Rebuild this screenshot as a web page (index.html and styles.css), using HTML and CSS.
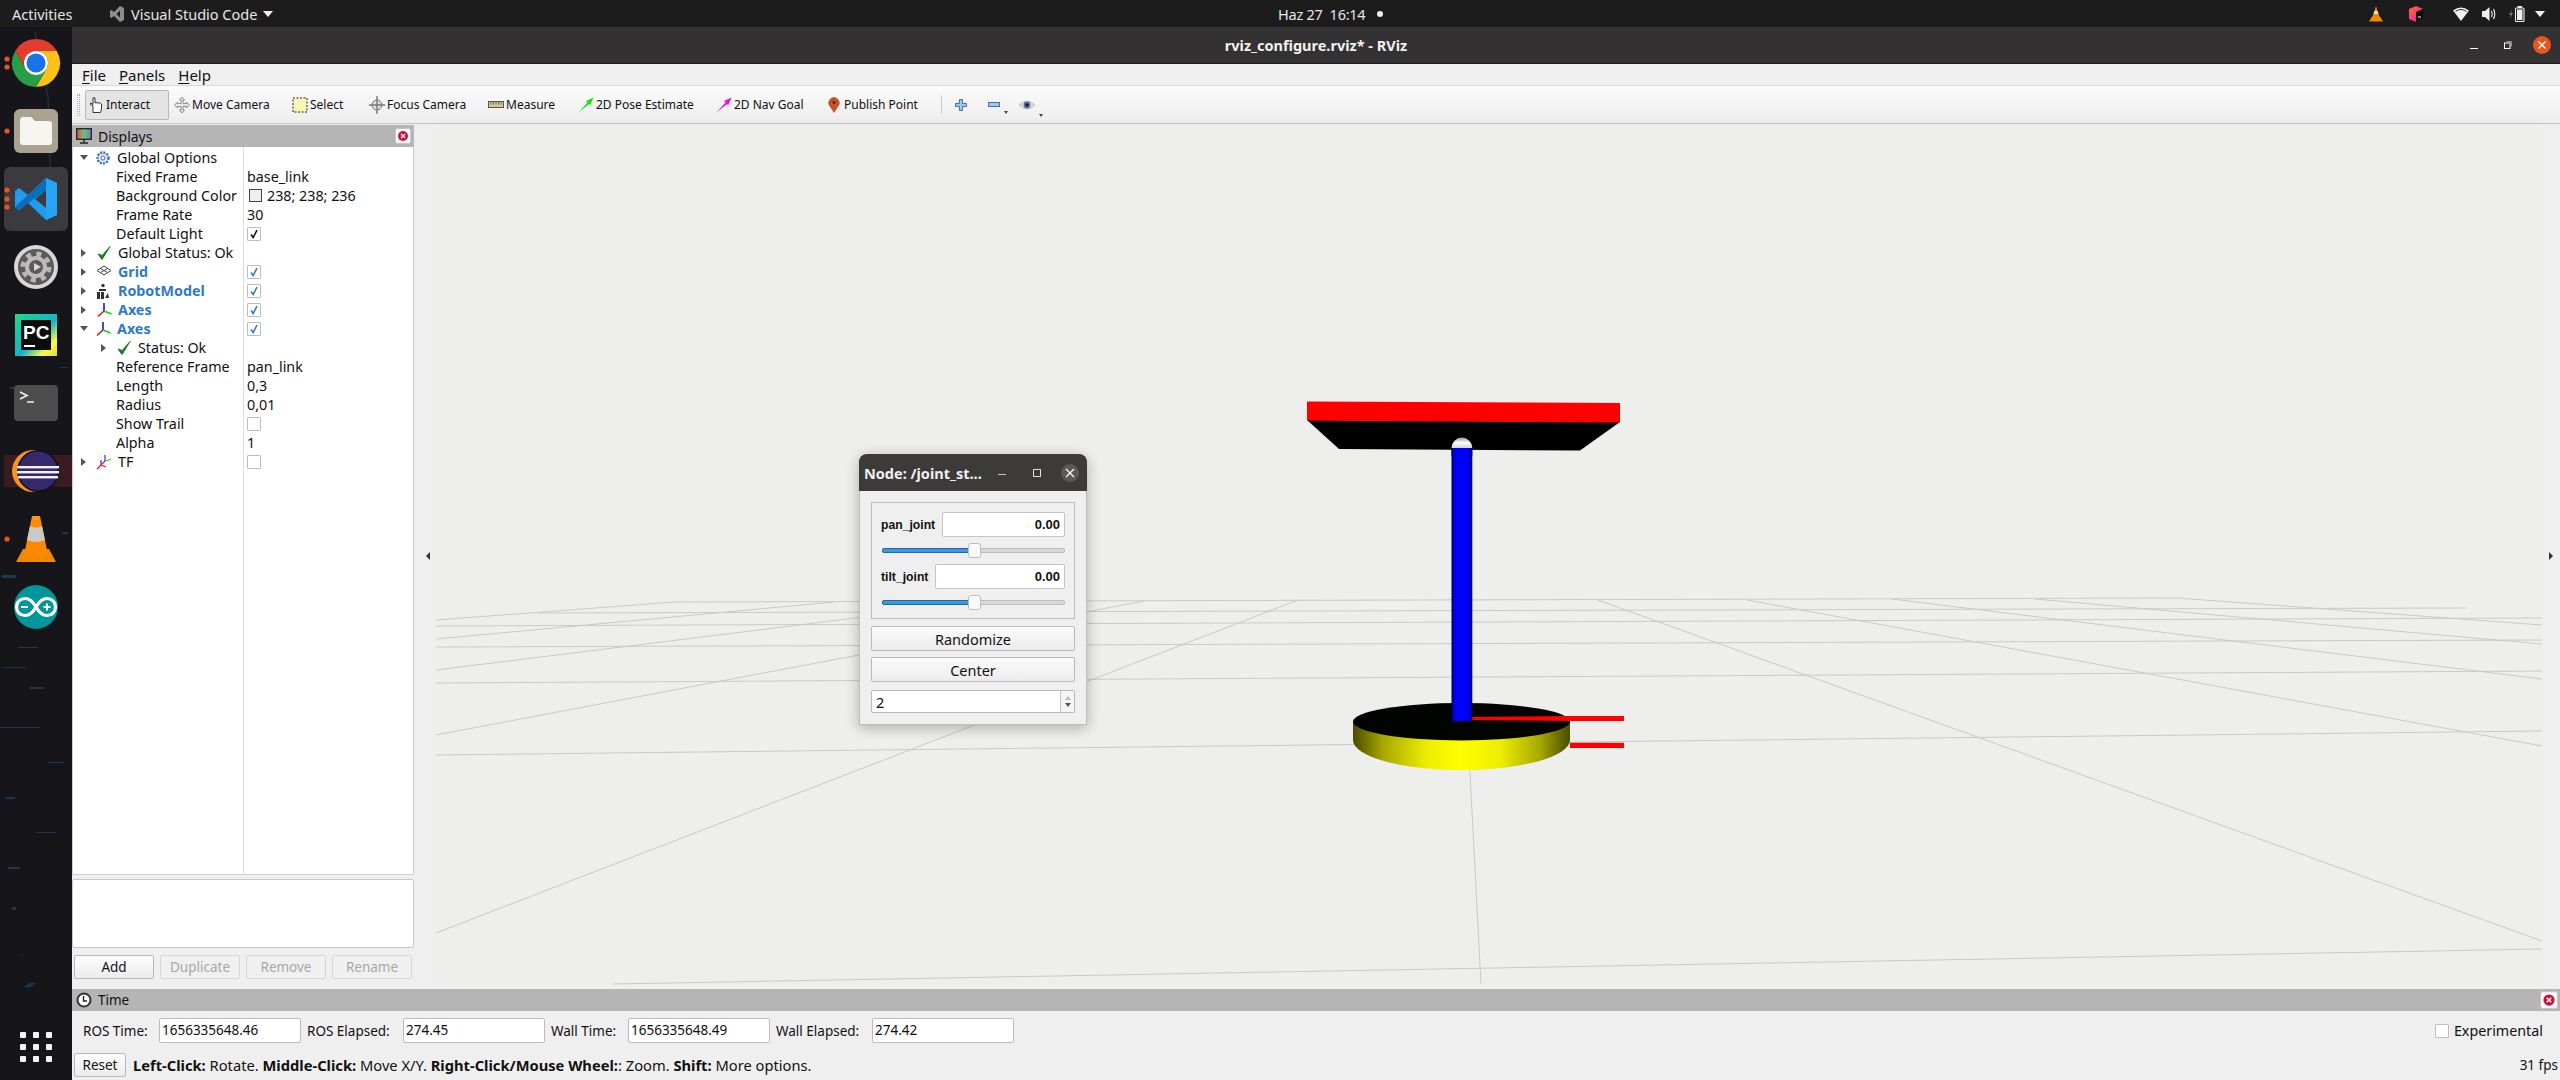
FILE: index.html
```html
<!DOCTYPE html>
<html lang="en">
<head>
<meta charset="utf-8">
<title>rviz_configure.rviz* - RViz</title>
<link rel="stylesheet" href="styles.css">
</head>
<body>
<svg class="sprite" aria-hidden="true">
  <defs>
    <linearGradient id="gBlue" x1="0" x2="1" y1="0" y2="0"><stop offset="0" stop-color="#000050"/><stop offset=".12" stop-color="#0000d8"/><stop offset=".3" stop-color="#0000ff"/><stop offset=".7" stop-color="#0000ff"/><stop offset=".88" stop-color="#0000d8"/><stop offset="1" stop-color="#000050"/></linearGradient>
    <linearGradient id="gYellow" x1="0" x2="1" y1="0" y2="0"><stop offset="0" stop-color="#4a4a00"/><stop offset=".14" stop-color="#a8a800"/><stop offset=".34" stop-color="#eded00"/><stop offset=".5" stop-color="#ffff00"/><stop offset=".68" stop-color="#eded00"/><stop offset=".86" stop-color="#a8a800"/><stop offset="1" stop-color="#4a4a00"/></linearGradient>
    <linearGradient id="gSphere" x1="0" x2="0" y1="0" y2="1"><stop offset="0" stop-color="#9c9c9c"/><stop offset=".5" stop-color="#ffffff"/><stop offset="1" stop-color="#d5d5d5"/></linearGradient>
    <linearGradient id="gPC" x1="0" x2="1" y1="0" y2="1"><stop offset="0" stop-color="#21d789"/><stop offset=".55" stop-color="#12b5c9"/><stop offset=".8" stop-color="#fcf84a"/><stop offset="1" stop-color="#d8e23e"/></linearGradient>
    <linearGradient id="gScreen" x1="0" x2="1" y1="0" y2="0"><stop offset="0" stop-color="#d9534f"/><stop offset=".5" stop-color="#6fbf73"/><stop offset="1" stop-color="#6f7fd0"/></linearGradient>
    <linearGradient id="gCube" x1="0" x2="1" y1="0" y2="1"><stop offset="0" stop-color="#f97a12"/><stop offset=".6" stop-color="#f72d8f"/><stop offset="1" stop-color="#a020f0"/></linearGradient>
    <symbol id="i-check" viewBox="0 0 14 14"><path d="M3.5 7.5 L6 11 L10.5 2.5" fill="none" stroke="currentColor" stroke-width="1.8"/></symbol>
    <symbol id="i-ok" viewBox="0 0 16 16"><path d="M2 9 L6 14.5 L14 1.5 L6.2 10.5 Z" fill="#1e7a25" stroke="#1e7a25" stroke-width="1"/></symbol>
    <symbol id="i-axes" viewBox="0 0 16 16"><path d="M8 9 V1" stroke="#1414e0" stroke-width="1.6"/><path d="M8 9 L2 14.5" stroke="#e01414" stroke-width="1.6"/><path d="M8 9 L15.5 12" stroke="#14d014" stroke-width="1.6"/></symbol>
    <symbol id="i-close" viewBox="0 0 16 16"><rect x=".5" y=".5" width="15" height="15" rx="2" fill="#fafafa" stroke="#c4c4c4"/><circle cx="8" cy="8" r="5" fill="#d0103a"/><path d="M6 6 L10 10 M10 6 L6 10" stroke="#fff" stroke-width="1.3"/></symbol>
  </defs>
</svg>

<header class="topbar">
  <span class="activities">Activities</span>
  <div class="appmenu">
    <svg class="ic14" viewBox="0 0 14 16"><path d="M10 0 L14 2 V14 L10 16 L4 10 L1.5 12 L0 11 V5 L1.5 4 L4 6 Z M10 4.5 L6.5 8 L10 11.5 Z" fill="#8d8d8d" fill-rule="evenodd"/></svg>
    <span>Visual Studio Code</span>
    <span class="caret"></span>
  </div>
  <div class="clock"><span>Haz 27&nbsp;&nbsp;16:14</span><span class="clockdot"></span></div>
  <div class="tray">
    <svg class="tray-vlc" viewBox="0 0 14 16"><path d="M7 0 L10.5 11 H3.5 Z" fill="#f08a00"/><path d="M5.4 5 H8.6 L9.4 8 H4.6 Z" fill="#ddd"/><path d="M3 10.5 H11 L14 15.5 H0 Z" fill="#f08a00"/></svg>
    <svg class="tray-pc" viewBox="0 0 14 16"><path d="M7 0 L14 3 V12 L7 16 L0 13 V3 Z" fill="url(#gCube)"/><path d="M7 6 L14 3 V12 L7 16 Z" fill="#0c0c0c"/><path d="M9 11 H12" stroke="#fff"/></svg>
    <svg class="tray-wifi" viewBox="0 0 16 14"><path d="M0 3.5 Q8 -2.5 16 3.5 L8 14 Z" fill="#f2f2f2"/><path d="M2.5 4.4 Q8 .6 13.5 4.4" fill="none" stroke="#1c1c1c" stroke-width=".9"/></svg>
    <svg class="tray-vol" viewBox="0 0 15 14"><path d="M0 4 H3 L7.5 0 V14 L3 10 H0 Z" fill="#eee"/><path d="M9.5 4 Q11 7 9.5 10 M11.5 2 Q14 7 11.5 12" stroke="#eee" stroke-width="1.2" fill="none"/></svg>
    <svg class="tray-bat" viewBox="0 0 16 16"><path d="M3 3 L0 9 H2 L1 13 L4 7 H2 Z" fill="#777"/><rect x="6.5" y="2" width="8.5" height="13.5" rx="1" fill="none" stroke="#eee" stroke-width="1.1"/><rect x="8.5" y="0" width="4.5" height="2" fill="#eee"/><rect x="8" y="3.5" width="5.5" height="10.5" fill="#eee"/></svg>
    <span class="caret tray-caret"></span>
  </div>
</header>

<div class="desktop">
  <nav class="dock">
    <svg class="wallpaper" viewBox="0 0 72 1053" preserveAspectRatio="none" aria-hidden="true">
      <path d="M35 5 L48 70 L52 200" stroke="#1c2f44" stroke-width="1.5" fill="none"/>
      <path d="M4 428 L72 428 L72 460 L4 460 Z" fill="#3a1b22"/>
      <path d="M0 700 h40 v1 h-40 Z M8 840 h12 v2 h-12 Z M18 620 h20 v1 h-20 Z M2 548 h14 v3 h-14 Z M10 360 h6 v2 h-6 Z M24 960 l6 -4 h6 l-6 4 Z M20 928 l2 -1 h2 l-2 1 Z M60 340 h8 v1 h-8 Z M4 640 h22 v1 h-22 Z M30 660 h14 v2 h-14 Z M48 735 h16 v1 h-16 Z M6 770 h9 v2 h-9 Z M36 805 h20 v1 h-20 Z M12 880 h4 v3 h-4 Z M62 505 h6 v2 h-6 Z" fill="#1a3954"/>
    </svg>
    <div class="dock-item"><svg viewBox="0 0 72 68">
      <circle cx="7" cy="30" r="2.6" fill="#e95420"/><circle cx="7" cy="38" r="2.6" fill="#e95420"/>
      <path d="M15.2 22 A24 24 0 0 1 56.8 22 H36 A12 12 0 0 0 25.6 40 Z" fill="#e33b2e"/>
      <path d="M56.8 22 A24 24 0 0 1 36 58 L46.4 40 A12 12 0 0 0 36 22 Z" fill="#fbc116"/>
      <path d="M36 58 A24 24 0 0 1 15.2 22 L25.6 40 A12 12 0 0 0 46.4 40 Z" fill="#2a9d47"/>
      <circle cx="36" cy="34" r="12" fill="#fff"/><circle cx="36" cy="34" r="9.5" fill="#1a73e8"/>
    </svg></div>
    <div class="dock-item"><svg viewBox="0 0 72 68">
      <circle cx="7" cy="34" r="2.6" fill="#e95420"/>
      <rect x="14" y="12" width="44" height="44" rx="6" fill="#aaa391"/>
      <path d="M20 24 Q20 20 23 20 H31 L35 24 H49 Q52 24 52 27 V45 Q52 48 49 48 H23 Q20 48 20 45 Z" fill="#f7f5ef"/>
    </svg></div>
    <div class="dock-item"><svg viewBox="0 0 72 68">
      <rect x="4" y="2" width="64" height="64" rx="6" fill="#3b3b3f"/>
      <circle cx="7" cy="25" r="2.6" fill="#e95420"/><circle cx="7" cy="34" r="2.6" fill="#e95420"/><circle cx="7" cy="42" r="2.6" fill="#e95420"/>
      <path d="M46 13 L57 18 V50 L46 55 L28 38 L19 45 L15 42 V26 L19 23 L28 30 Z M46 25 L35 34 L46 43 Z" fill="#1f9cf0" fill-rule="evenodd"/>
      <path d="M15 42 L46 13 V25 L19 45 Z" fill="#0a6fb8"/>
      <path d="M46 13 L57 18 V50 L46 55 Z" fill="#27a4f5"/>
    </svg></div>
    <div class="dock-item"><svg viewBox="0 0 72 68">
      <circle cx="36" cy="34" r="22" fill="#d9d8d5"/><circle cx="36" cy="34" r="18" fill="#5a595d"/>
      <circle cx="36" cy="34" r="13" fill="none" stroke="#b9b8b5" stroke-width="5" stroke-dasharray="5 5.2"/>
      <circle cx="36" cy="34" r="9" fill="none" stroke="#bdbcb9" stroke-width="4"/>
      <path d="M34 30 L41 34 L34 38 Z" fill="#d9d8d5"/>
    </svg></div>
    <div class="dock-item"><svg viewBox="0 0 72 68">
      <rect x="15" y="13" width="42" height="42" fill="url(#gPC)"/>
      <rect x="21" y="19" width="30" height="30" fill="#0d0d0d"/>
      <text x="23" y="38" class="pc-text">PC</text>
      <rect x="24" y="44" width="11" height="2" fill="#fff"/>
    </svg></div>
    <div class="dock-item"><svg viewBox="0 0 72 68">
      <rect x="14" y="16" width="44" height="36" rx="4" fill="#4d4d4d"/>
      <path d="M20 23 L27 26.5 L20 30 M27 33 H34" stroke="#f2f2f2" stroke-width="1.6" fill="none"/>
    </svg></div>
    <div class="dock-item"><svg viewBox="0 0 72 68">
      <circle cx="33" cy="34" r="21" fill="#f7941e"/>
      <circle cx="38" cy="34" r="21" fill="#0f0c1c"/><circle cx="38" cy="34" r="19.5" fill="#35296b"/>
      <rect x="17" y="29" width="42" height="2.4" fill="#f4f2fa"/><rect x="17" y="34" width="42" height="2.4" fill="#f4f2fa"/><rect x="18" y="39" width="40" height="2.4" fill="#f4f2fa"/>
    </svg></div>
    <div class="dock-item"><svg viewBox="0 0 72 68">
      <circle cx="7" cy="34" r="2.6" fill="#e95420"/>
      <path d="M23 44 H49 L56 57 H16 Z" fill="#f08a00"/>
      <path d="M32 11 H40 L48 50 Q36 56 24 50 Z" fill="#ff8800"/>
      <path d="M30 21 Q36 24 42 21 L45 35 Q36 39 27 35 Z" fill="#c9c9c9"/>
      <path d="M33 11 H39 L40 15 H32 Z" fill="#f39a20"/>
    </svg></div>
    <div class="dock-item"><svg viewBox="0 0 72 68">
      <circle cx="36" cy="34" r="22" fill="#00979c"/>
      <path d="M36 34 C32 27 28 25.5 25 25.5 A8.5 8.5 0 0 0 25 42.5 C28 42.5 32 41 36 34 C40 27 44 25.5 47 25.5 A8.5 8.5 0 0 1 47 42.5 C44 42.5 40 41 36 34 Z" fill="none" stroke="#fff" stroke-width="3.2"/>
      <path d="M21 34 H28 M43.5 34 H50.5 M47 30.5 V37.5" stroke="#fff" stroke-width="2"/>
    </svg></div>
    <div class="dock-grid" aria-label="Show Applications"><i></i><i></i><i></i><i></i><i></i><i></i><i></i><i></i><i></i></div>
  </nav>

  <main class="app">
    <div class="titlebar">
      <span class="title">rviz_configure.rviz* - RViz</span>
      <div class="winctl">
        <span class="win-min"></span>
        <svg class="win-max" viewBox="0 0 8 8"><rect x=".5" y="2" width="5.5" height="5.5" fill="none" stroke="#fff" stroke-width="1"/><path d="M2.5 .5 H7.5 V5.5" fill="none" stroke="#aaa" stroke-width=".8"/></svg>
        <svg class="win-close" viewBox="0 0 18 18"><circle cx="9" cy="9" r="9" fill="#e95420"/><path d="M5.5 5.5 L12.5 12.5 M12.5 5.5 L5.5 12.5" stroke="#fff" stroke-width="1.4"/></svg>
      </div>
    </div>

    <div class="menubar">
      <span><u>F</u>ile</span><span><u>P</u>anels</span><span><u>H</u>elp</span>
    </div>

    <div class="toolbar">
      <span class="grip"></span>
      <div class="tool active t1">
        <svg viewBox="0 0 16 18"><path d="M5 16.5 V10 L2.5 8.5 V7 L5 8.5 V2 Q6 1 7 2 V7 Q8 6 9 7 Q10 6 11 7.3 Q12.5 6.5 13.5 8 V13 L12.5 16.5 Z" fill="#fff" stroke="#222" stroke-width=".9"/></svg>
        <span>Interact</span>
      </div>
      <div class="tool t2">
        <svg viewBox="0 0 16 18"><path d="M8 1 L10.5 4 H9 V7.5 H12.5 V6 L15.5 9 L12.5 12 V10.5 H9 V14 H10.5 L8 17 L5.5 14 H7 V10.5 H3.5 V12 L.5 9 L3.5 6 V7.5 H7 V4 H5.5 Z" fill="#e8e8e8" stroke="#777" stroke-width=".8"/></svg>
        <span>Move Camera</span>
      </div>
      <div class="tool t3">
        <svg viewBox="0 0 16 16"><rect x="1" y="1" width="14" height="14" fill="#fbf5b5" stroke="#222" stroke-dasharray="2 1.5"/></svg>
        <span>Select</span>
      </div>
      <div class="tool t4">
        <svg viewBox="0 0 16 18"><circle cx="8" cy="9" r="5" fill="#ddd" stroke="#777"/><path d="M8 0 V18 M0 9 H16" stroke="#777" stroke-width="1.4"/></svg>
        <span>Focus Camera</span>
      </div>
      <div class="tool t5">
        <svg viewBox="0 0 16 8"><rect x=".5" y=".5" width="15" height="6" fill="#d6c78f" stroke="#555"/><path d="M3 1 V3.5 M5.5 1 V3.5 M8 1 V3.5 M10.5 1 V3.5 M13 1 V3.5" stroke="#555" stroke-width=".8"/></svg>
        <span>Measure</span>
      </div>
      <div class="tool t6">
        <svg viewBox="0 0 16 16"><path d="M15.5 .5 L8 4 L9.5 5.5 L.5 15.5 L11 7 L12 8.5 Z" fill="#16e016"/></svg>
        <span>2D Pose Estimate</span>
      </div>
      <div class="tool t7">
        <svg viewBox="0 0 16 16"><path d="M15.5 .5 L8 4 L9.5 5.5 L.5 15.5 L11 7 L12 8.5 Z" fill="#f010d8"/></svg>
        <span>2D Nav Goal</span>
      </div>
      <div class="tool t8">
        <svg class="pin" viewBox="0 0 12 16"><path d="M6 16 L1.5 9 A5.5 5.5 0 1 1 10.5 9 Z" fill="#c4552b"/><circle cx="6" cy="5.5" r="1.8" fill="#6f2f14"/></svg>
        <span>Publish Point</span>
      </div>
      <span class="tool-sep"></span>
      <svg class="tool-plus" viewBox="0 0 12 12"><path d="M4.5 .5 H7.5 V4.5 H11.5 V7.5 H7.5 V11.5 H4.5 V7.5 H.5 V4.5 H4.5 Z" fill="#a7c4e8" stroke="#3e6fb3"/></svg>
      <div class="tool-more">
        <svg class="tool-minus" viewBox="0 0 12 5"><rect x=".5" y=".5" width="11" height="4" fill="#a7c4e8" stroke="#3e6fb3"/></svg>
        <span class="tiny-caret"></span>
      </div>
      <div class="tool-more eye-wrap">
        <svg class="tool-eye" viewBox="0 0 16 10"><path d="M0 5 Q8 -3 16 5 Q8 13 0 5 Z" fill="#dcdce2" stroke="#aaa" stroke-width=".6"/><circle cx="8" cy="5" r="3.4" fill="#5a68a8"/><circle cx="8" cy="5" r="1.4" fill="#111"/></svg>
        <span class="tiny-caret"></span>
      </div>
    </div>

    <div class="workspace">
      <aside class="displays">
        <div class="dockhead">
          <svg class="monitor" viewBox="0 0 16 16"><rect x=".7" y=".7" width="14.6" height="10.6" fill="url(#gScreen)" stroke="#222" stroke-width="1.3"/><path d="M8 11 V14 M4 15 H12" stroke="#222" stroke-width="1.5"/></svg>
          <span class="dockhead-title">Displays</span>
          <svg class="closebtn" viewBox="0 0 16 16"><use href="#i-close"/></svg>
        </div>
        <div class="tree">
          <div class="row"><div class="name"><i class="arrow down"></i><svg class="ticon" viewBox="0 0 16 16"><circle cx="8" cy="8" r="5.5" fill="#dfe7f7" stroke="#3f6fc4" stroke-width="2.4" stroke-dasharray="2 1.2"/><circle cx="8" cy="8" r="2" fill="#fff" stroke="#3f6fc4"/></svg><span>Global Options</span></div></div>
          <div class="row"><div class="name prop">Fixed Frame</div><div class="val">base_link</div></div>
          <div class="row"><div class="name prop">Background Color</div><div class="val"><i class="swatch"></i>238; 238; 236</div></div>
          <div class="row"><div class="name prop">Frame Rate</div><div class="val">30</div></div>
          <div class="row"><div class="name prop">Default Light</div><div class="val"><span class="cb"><svg viewBox="0 0 14 14"><use href="#i-check"/></svg></span></div></div>
          <div class="row"><div class="name"><i class="arrow"></i><svg class="ticon" viewBox="0 0 16 16"><use href="#i-ok"/></svg><span>Global Status: Ok</span></div></div>
          <div class="row"><div class="name"><i class="arrow"></i><svg class="ticon" viewBox="0 0 16 16"><path d="M8 2 L15 6.5 L8 11 L1 6.5 Z M4.5 4.5 L11.5 8.5 M11.5 4.5 L4.5 8.5" fill="none" stroke="#444" stroke-width="1"/></svg><span class="blue">Grid</span></div><div class="val"><span class="cb on"><svg viewBox="0 0 14 14"><use href="#i-check"/></svg></span></div></div>
          <div class="row"><div class="name"><i class="arrow"></i><svg class="ticon" viewBox="0 0 16 16"><circle cx="7" cy="2.5" r="1.7" fill="#333"/><path d="M3 6 H10 V8 H3 Z M1 16 V9 H4 V16 Z M5 16 V9 H8 V16 Z M9 15 L12 10 L13 15 H15.5" fill="#333"/></svg><span class="blue">RobotModel</span></div><div class="val"><span class="cb on"><svg viewBox="0 0 14 14"><use href="#i-check"/></svg></span></div></div>
          <div class="row"><div class="name"><i class="arrow"></i><svg class="ticon" viewBox="0 0 16 16"><use href="#i-axes"/></svg><span class="blue">Axes</span></div><div class="val"><span class="cb on"><svg viewBox="0 0 14 14"><use href="#i-check"/></svg></span></div></div>
          <div class="row"><div class="name"><i class="arrow down"></i><svg class="ticon" viewBox="0 0 16 16"><use href="#i-axes"/></svg><span class="blue">Axes</span></div><div class="val"><span class="cb on"><svg viewBox="0 0 14 14"><use href="#i-check"/></svg></span></div></div>
          <div class="row"><div class="name sub"><i class="arrow"></i><svg class="ticon" viewBox="0 0 16 16"><use href="#i-ok"/></svg><span>Status: Ok</span></div></div>
          <div class="row"><div class="name prop">Reference Frame</div><div class="val">pan_link</div></div>
          <div class="row"><div class="name prop">Length</div><div class="val">0,3</div></div>
          <div class="row"><div class="name prop">Radius</div><div class="val">0,01</div></div>
          <div class="row"><div class="name prop">Show Trail</div><div class="val"><span class="cb"></span></div></div>
          <div class="row"><div class="name prop">Alpha</div><div class="val">1</div></div>
          <div class="row"><div class="name"><i class="arrow"></i><svg class="ticon" viewBox="0 0 16 16"><path d="M5 11 L1 15 M5 11 L10 13" stroke-width="1.1" stroke="#e01414"/><path d="M9 7 V1" stroke="#1414e0" stroke-width="1.1"/><path d="M9 7 L6 10" stroke="#e01414" stroke-width="1.1"/><path d="M9 7 L15 5.5" stroke="#14d014" stroke-width="1.1"/><path d="M5 11 V6" stroke="#1414e0" stroke-width="1.1"/></svg><span>TF</span></div><div class="val"><span class="cb"></span></div></div>
        </div>
        <div class="descbox"></div>
        <div class="dispbtns">
          <button class="qbtn">Add</button>
          <button class="qbtn off">Duplicate</button>
          <button class="qbtn off">Remove</button>
          <button class="qbtn off">Rename</button>
        </div>
      </aside>

      <div class="split left"><i class="split-arrow l"></i></div>

      <div class="view">
        <svg class="scene" viewBox="436 124 2106 860" role="img" aria-label="3D view of the pan-tilt robot model on a grid">
          <g class="grid">
            <path d="M436 754 L2542 730"/>
            <path d="M436 682 L2542 670"/>
            <path d="M436 646 L2542 639"/>
            <path d="M436 625 L2542 617"/>
            <path d="M538 612 L2466 607"/>
            <path d="M675 601 L2177 597"/>
            <path d="M613 983 L2542 948"/>
            <path d="M675 601 L436 619"/>
            <path d="M834 601 L436 638"/>
            <path d="M992 600 L436 669"/>
            <path d="M1144 600 L436 734"/>
            <path d="M1298 599 L436 932"/>
            <path d="M1461 599 L1481 983"/>
            <path d="M1598 599 L2542 940"/>
            <path d="M1747 599 L2542 745"/>
            <path d="M1892 598 L2542 678"/>
            <path d="M2035 598 L2542 643"/>
            <path d="M2177 597 L2542 624"/>
          </g>
          <path d="M1570 741.7 H1624 V747 H1570 Z" fill="#ff0000"/>
          <path d="M1353 721 V739 A108.5 30 0 0 0 1570 739 V721 Z" fill="url(#gYellow)"/>
          <ellipse cx="1461.5" cy="720.7" rx="108.5" ry="18.7" fill="#020402"/>
          <path d="M1472 716 L1570 715 V720 L1472 719 Z" fill="#ff0000"/>
          <path d="M1570 715 H1624 V720 H1570 Z" fill="#ff0000"/>
          <path d="M1451.5 447 H1472.3 V720 H1451.5 Z" fill="url(#gBlue)"/>
          <path d="M1307 419 L1620 421 L1580 449.5 L1339 448 Z" fill="#000"/>
          <path d="M1307 400.5 L1620 402 V421.5 L1307 419.5 Z" fill="#ff0000"/>
          <path d="M1451.5 447 A10.4 10.4 0 0 1 1472.3 447 Z" fill="url(#gSphere)"/>
          <path d="M1451.5 447 H1472.3 V455 H1451.5 Z" fill="url(#gBlue)"/>
        </svg>
      </div>

      <div class="split right"><i class="split-arrow r"></i></div>
    </div>

    <section class="timepanel">
      <div class="dockhead timehead">
        <svg class="clockicon" viewBox="0 0 16 16"><circle cx="8" cy="8" r="6.5" fill="#fff" stroke="#333" stroke-width="2"/><path d="M7.5 4 V9 H11" stroke="#222" stroke-width="1.4" fill="none"/></svg>
        <span class="dockhead-title">Time</span>
        <svg class="closebtn" viewBox="0 0 16 16"><use href="#i-close"/></svg>
      </div>
      <div class="timerow">
        <label>ROS Time:</label><span class="tfield">1656335648.46</span>
        <label class="pad">ROS Elapsed:</label><span class="tfield">274.45</span>
        <label class="pad">Wall Time:</label><span class="tfield">1656335648.49</span>
        <label class="pad">Wall Elapsed:</label><span class="tfield">274.42</span>
        <div class="experimental"><span class="cb exp-cb"></span><span>Experimental</span></div>
      </div>
      <div class="statusrow">
        <button class="qbtn reset">Reset</button>
        <span class="hint"><b>Left-Click:</b> Rotate. <b>Middle-Click:</b> Move X/Y. <b>Right-Click/Mouse Wheel:</b>: Zoom. <b>Shift:</b> More options.</span>
        <span class="fps">31 fps</span>
      </div>
    </section>
  </main>
</div>

<div class="jsp">
  <div class="jsp-title">
    <span class="jsp-name">Node: /joint_st...</span>
    <span class="jsp-min"></span>
    <span class="jsp-max"></span>
    <svg class="jsp-close" viewBox="0 0 18 18"><circle cx="9" cy="9" r="9" fill="#5b5958"/><path d="M5 5 L13 13 M13 5 L5 13" stroke="#fff" stroke-width="1.2"/></svg>
  </div>
  <div class="jsp-body">
    <div class="jsp-group">
      <div class="jrow"><span class="jlabel">pan_joint</span><span class="jfield">0.00</span></div>
      <div class="slider"><i class="fill"></i><i class="knob"></i></div>
      <div class="jrow"><span class="jlabel">tilt_joint</span><span class="jfield">0.00</span></div>
      <div class="slider"><i class="fill"></i><i class="knob"></i></div>
    </div>
    <button class="jbtn">Randomize</button>
    <button class="jbtn">Center</button>
    <div class="spin"><span class="spin-val">2</span><span class="spin-arrows"><i class="up"></i><i class="dn"></i></span></div>
  </div>
</div>
</body>
</html>
```

FILE: styles.css
```css
* { box-sizing: border-box; }
html, body { margin: 0; padding: 0; }
body {
  width: 2560px; height: 1080px; overflow: hidden; position: relative;
  font-family: "Noto Sans", "Liberation Sans", sans-serif;
  font-size: 14.3px; color: #111; background: #16161a;
  display: flex; flex-direction: column;
}
.sprite { position: absolute; width: 0; height: 0; }
button { font-family: inherit; margin: 0; }

/* GNOME top bar */
.topbar {
  height: 27px; flex: none; background: #1c1c1c; color: #e6e6e6;
  display: flex; align-items: center; position: relative; font-size: 14.5px;
}
.activities { margin-left: 12px; width: 98px; }
.appmenu { display: flex; align-items: center; gap: 7px; }
.ic14 { width: 14px; height: 16px; }
.caret { width: 0; height: 0; border: 5px solid transparent; border-top: 6px solid #f0f0f0; border-bottom: 0; margin-left: -1px; }
.clock { position: absolute; left: 1278px; top: 0; height: 27px; display: flex; align-items: center; gap: 12px; letter-spacing: -.25px; }
.clockdot { width: 6px; height: 6px; border-radius: 50%; background: #eee; }
.tray { position: absolute; left: 2369px; top: 0; height: 27px; display: flex; align-items: center; }
.tray svg { flex: none; }
.tray-vlc { width: 14px; height: 16px; }
.tray-pc { width: 14px; height: 16px; margin-left: 26px; }
.tray-wifi { width: 16px; height: 14px; margin-left: 30px; }
.tray-vol { width: 15px; height: 14px; margin-left: 13px; }
.tray-bat { width: 16px; height: 16px; margin-left: 12px; }
.tray-caret { margin-left: 10px; }

.desktop { flex: 1; display: flex; min-height: 0; }

/* Ubuntu dock */
.dock {
  width: 72px; flex: none; background: #16161a; position: relative;
  display: flex; flex-direction: column; padding-top: 2px;
}
.wallpaper { position: absolute; inset: 0; width: 100%; height: 100%; }
.dock-item { height: 68px; flex: none; position: relative; }
.dock-item svg { display: block; width: 72px; height: 68px; }
.pc-text { font: bold 19px "Liberation Sans", sans-serif; fill: #fff; }
.dock-grid {
  margin-top: auto; margin-bottom: 18px; align-self: center; position: relative;
  display: grid; grid-template-columns: repeat(3, 6px); grid-auto-rows: 6px; gap: 6px 7px;
}
.dock-grid i { background: #f4f4f4; border-radius: 1px; }

/* RViz window */
.app { flex: 1; display: flex; flex-direction: column; background: #efefef; min-width: 0; }
.titlebar {
  height: 37px; flex: none; background: #333132; color: #f2f2f2;
  display: flex; align-items: center; justify-content: center; position: relative;
  border-bottom: 1px solid #1c1c1c;
}
.title { font-weight: 700; font-size: 14.5px; margin-left: 0; }
.winctl { position: absolute; right: 9px; top: 9px; display: flex; align-items: center; height: 18px; }
.win-min { width: 8px; height: 1px; background: #fff; margin-top: 6px; }
.win-max { width: 8px; height: 8px; margin-left: 26px; }
.win-close { width: 18px; height: 18px; margin-left: 21px; }

.menubar {
  height: 21px; flex: none; background: #efefef; display: flex; align-items: center;
  padding-left: 10px; gap: 13px; font-size: 15px;
}
.menubar u { text-underline-offset: 2px; }

.toolbar {
  height: 39px; flex: none; display: flex; align-items: center;
  background: linear-gradient(#fbfbfb, #ededed);
  border-top: 1px solid #d8d8d8; border-bottom: 1px solid #c2c2c2;
  font-size: 12px; padding-left: 5px;
}
.grip { width: 3px; height: 22px; margin-right: 5px; border-left: 1px dotted #aaa; border-right: 1px dotted #aaa; }
.tool { display: flex; align-items: center; gap: 2px; height: 30px; flex: none; padding-left: 3px; }
.tool svg { width: 16px; height: 18px; flex: none; }
.tool.active { background: #e4e4e4; border: 1px solid #b8b8b8; border-radius: 2px; padding-left: 2px; }
.t1 { width: 84px; margin-right: 2px; }
.t2 { width: 118px; }
.t3 { width: 77px; }
.t4 { width: 119px; }
.t5 { width: 90px; }
.t6 { width: 138px; }
.t7 { width: 112px; }
.t8 { width: 116px; gap: 4px; }
.pin { width: 12px !important; height: 16px !important; }
.tool-sep { width: 1px; height: 19px; background: #ccc; margin-left: 0; }
.tool-plus { width: 12px; height: 12px; margin-left: 13px; flex: none; }
.tool-more { position: relative; margin-left: 21px; display: flex; align-items: center; }
.tool-minus { width: 12px; height: 5px; display: block; }
.tool-eye { width: 16px; height: 10px; display: block; }
.eye-wrap { margin-left: 19px; }
.tiny-caret { position: absolute; right: -8px; bottom: -7px; width: 0; height: 0; border: 2.5px solid transparent; border-top: 3px solid #444; border-bottom: 0; }

.workspace { flex: 1; display: flex; min-height: 0; padding-top: 1px; }

/* Displays panel */
.displays { width: 342px; flex: none; display: flex; flex-direction: column; }
.dockhead {
  height: 22px; flex: none; background: #b5b5b5; display: flex; align-items: center;
  font-size: 14px; padding: 0 3px 0 4px; position: relative;
}
.monitor { width: 16px; height: 16px; flex: none; }
.dockhead-title { margin-left: 6px; flex: 1; }
.closebtn { width: 16px; height: 16px; flex: none; }
.tree {
  flex: 1; min-height: 0; padding-top: 1px;
  background: #fff linear-gradient(#dcdcdc, #dcdcdc) 170px 0 / 1px 100% no-repeat;
  border: 1px solid #cfcfcf; border-top: 0;
}
.row { height: 19px; display: flex; align-items: center; white-space: nowrap; }
.name { width: 171px; flex: none; display: flex; align-items: center; padding-left: 7px; }
.name.prop { padding-left: 43px; }
.name.sub { padding-left: 27px; }
.val { padding-left: 3px; display: flex; align-items: center; }
.arrow { width: 0; height: 0; flex: none; border-left: 5px solid #555; border-top: 4px solid transparent; border-bottom: 4px solid transparent; margin-right: 10px; margin-left: 1px; }
.arrow.down { border-left: 4px solid transparent; border-right: 4px solid transparent; border-top: 5px solid #555; border-bottom: 0; margin-right: 7px; margin-left: 0; }
.ticon { width: 16px; height: 16px; flex: none; margin-right: 6px; }
.blue { color: #2f7ac6; font-weight: 700; }
.swatch { width: 13px; height: 13px; border: 1px solid #444; background: #eeeeec; margin: 0 5px 0 2px; flex: none; }
.cb { width: 14px; height: 14px; border: 1px solid #bdbdbd; background: #fff; display: block; flex: none; color: #111; border-radius: 1px; }
.cb svg { width: 12px; height: 12px; display: block; }
.cb.on { color: #2f7ac6; }
.descbox { height: 69px; flex: none; margin-top: 4px; background: #fff; border: 1px solid #c8c8c8; border-radius: 2px; }
.dispbtns { flex: none; display: flex; gap: 6px; padding: 7px 0 10px 2px; }
.qbtn {
  width: 80px; height: 24px; padding: 0; font-size: 13.5px; color: #111;
  background: linear-gradient(#fdfdfd, #ececec); border: 1px solid #b9b9b9; border-radius: 2px;
}
.qbtn.off { color: #a8a8a8; background: #f0f0f0; border-color: #d6d6d6; }

/* splitters */
.split { flex: none; position: relative; display: flex; align-items: center; justify-content: center; }
.split.left { width: 22px; }
.split.right { flex: 1; }
.split-arrow { width: 0; height: 0; border-top: 4px solid transparent; border-bottom: 4px solid transparent; }
.split-arrow.l { border-right: 4px solid #333; margin-left: 6px; margin-top: -2px; }
.split-arrow.r { border-left: 4px solid #333; margin-top: -2px; }

/* 3D view */
.view { width: 2106px; flex: none; background: #eeeeec; height: 860px; }
.scene { display: block; width: 2106px; height: 860px; }
.grid path { stroke: #c9c9c7; stroke-width: 1; fill: none; }

/* Time panel */
.timepanel { height: 91px; flex: none; display: flex; flex-direction: column; background: #efefef; }
.timehead { padding-left: 4px; }
.clockicon { width: 16px; height: 16px; flex: none; }
.timehead .dockhead-title { margin-left: 6px; font-size: 13.5px; }
.timehead .closebtn { width: 18px; height: 18px; margin-right: -1px; }
.timerow {
  height: 25px; margin-top: 7px; flex: none; padding-left: 11px; font-size: 13.5px;
  display: grid; align-items: center;
  grid-template-columns: 76px 142px 102px 142px 83px 142px 102px 142px 1fr;
}
.timerow label { white-space: nowrap; }
.timerow label.pad { padding-left: 6px; }
.tfield { height: 25px; line-height: 23px; background: #fff; border: 1px solid #bcbcbc; border-radius: 2px; padding-left: 2px; white-space: nowrap; }
.experimental { justify-self: end; display: flex; align-items: center; gap: 5px; padding-right: 17px; font-size: 14.3px; }
.exp-cb { width: 14px; height: 14px; }
.statusrow { flex: 1; display: flex; align-items: center; padding: 6px 2px 0 2px; font-size: 13.5px; }
.reset { width: 52px; height: 24px; }
.hint { margin-left: 7px; white-space: nowrap; font-size: 14.7px; }
.hint b { font-weight: 700; }
.fps { margin-left: auto; }

/* joint_state_publisher dialog: a free-floating desktop window */
.jsp {
  position: absolute; left: 859px; top: 454px; width: 228px; height: 271px;
  background: #efefef; border: 1px solid #bdbdbd; border-top: 0; border-radius: 8px 8px 0 0;
  box-shadow: 0 3px 14px rgba(0,0,0,.28); display: flex; flex-direction: column;
}
.jsp-title {
  height: 37px; flex: none; background: #3d3b3a; color: #f0f0f0; border-radius: 8px 8px 0 0;
  margin: 0 -1px; display: flex; align-items: center; padding-left: 5px;
  font-weight: 700; font-size: 14.5px; white-space: nowrap;
}
.jsp-name { width: 127px; overflow: hidden; }
.jsp-min { width: 8px; height: 1px; background: #ccc; margin: 4px 0 0 7px; }
.jsp-max { width: 8px; height: 8px; border: 1px solid #ddd; margin-left: 27px; }
.jsp-close { width: 18px; height: 18px; margin-left: 20px; }
.jsp-body { flex: 1; padding: 11px 11px 0 11px; display: flex; flex-direction: column; }
.jsp-group { height: 117px; flex: none; border: 1px solid #bcbcbc; padding: 9px 9px 0 9px; margin-bottom: 7px; }
.jrow { display: flex; align-items: center; height: 25px; }
.jlabel { font: bold 12.2px "Liberation Sans", sans-serif; color: #111; margin-right: 7px; white-space: nowrap; }
.jfield { flex: 1; height: 25px; background: #fff; border: 1px solid #c4c4c4; border-radius: 2px; text-align: right; padding-right: 4px; font: bold 13px/23px "Liberation Sans", sans-serif; }
.slider { height: 5px; background: #d8d8d8; border: 1px solid #bdbdbd; border-radius: 2px; margin: 11px 0 11px 1px; position: relative; }
.slider .fill { position: absolute; left: -1px; top: -1px; height: 5px; width: 92px; background: #3f96dc; border: 1px solid #1d6aa8; border-radius: 2px; }
.slider .knob { position: absolute; left: 85px; top: -6px; width: 13px; height: 15px; background: #fafafa; border: 1px solid #bdbdbd; border-radius: 3px; }
.jbtn { height: 25px; flex: none; margin-bottom: 6px; padding: 0; font-size: 14.5px; color: #111; background: linear-gradient(#fbfbfb, #ececec); border: 1px solid #b9b9b9; border-radius: 2px; }
.spin { height: 23px; flex: none; margin-top: 2px; background: #fff; border: 1px solid #b9b9b9; border-radius: 2px; display: flex; align-items: center; font-size: 14.5px; }
.spin-val { flex: 1; padding-left: 4px; }
.spin-arrows { width: 14px; height: 100%; border-left: 1px solid #c4c4c4; display: flex; flex-direction: column; align-items: center; justify-content: center; gap: 3px; background: #f4f4f4; }
.spin-arrows i { width: 0; height: 0; border: 3px solid transparent; }
.spin-arrows .up { border-bottom: 4px solid #bbb; border-top: 0; }
.spin-arrows .dn { border-top: 4px solid #555; border-bottom: 0; }
```
